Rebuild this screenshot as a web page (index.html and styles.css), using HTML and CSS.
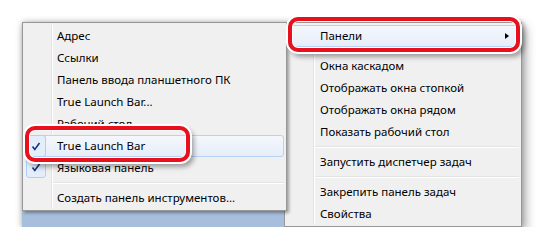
FILE: index.html
```html
<!DOCTYPE html>
<html lang="ru">
<head>
    <meta charset="UTF-8">
    <title>Панели</title>
    <link rel="stylesheet" href="styles.css">
</head>
<body>
<div class="scene">
    <div class="left-col">
        <div class="menu sub-menu">
            <div class="item">Адрес</div>
            <div class="item">Ссылки</div>
            <div class="item">Панель ввода планшетного ПК</div>
            <div class="item">True Launch Bar...</div>
            <div class="item">Рабочий стол</div>
            <div class="item hover checked">
                <span class="check"><svg width="10" height="9" viewBox="0 0 10 9"><path d="M1.5 4.5 L3.8 7.5 L8.5 1" fill="none" stroke="#1b2f86" stroke-width="1.6"/></svg></span>
                True Launch Bar
            </div>
            <div class="item checked">
                <span class="check"><svg width="10" height="9" viewBox="0 0 10 9"><path d="M1.5 4.5 L3.8 7.5 L8.5 1" fill="none" stroke="#1b2f86" stroke-width="1.6"/></svg></span>
                Языковая панель
            </div>
            <div class="sep"></div>
            <div class="item">Создать панель инструментов...</div>
        </div>
        <div class="desk"></div>
    </div>

    <div class="menu main-menu">
        <div class="item hover">Панели<span class="arrow"></span></div>
        <div class="sep"></div>
        <div class="item">Окна каскадом</div>
        <div class="item">Отображать окна стопкой</div>
        <div class="item">Отображать окна рядом</div>
        <div class="item">Показать рабочий стол</div>
        <div class="sep"></div>
        <div class="item">Запустить диспетчер задач</div>
        <div class="sep"></div>
        <div class="item">Закрепить панель задач</div>
        <div class="item">Свойства</div>
    </div>

    <!-- red marks drawn over the screenshot -->
    <div class="mark mark-left"></div>
    <div class="mark mark-right"></div>
</div>
</body>
</html>
```

FILE: styles.css
```css
body {margin: 0; background: #fff; font-family: "Noto Sans", "Open Sans", sans-serif; font-size: 11.5px; color: #000;}

.scene {position: relative; display: flex; margin: 22px 0 0 22px; width: 500px; height: 205px;
    box-shadow: 0 0 6px rgba(0,0,0,0.25), 4px 5px 10px rgba(0,0,0,0.3);}

.left-col {width: 262px; display: flex; flex-direction: column; position: relative; z-index: 1;}
.desk {flex: 1; background: #a7bfdc;}

/* menu styles */
.menu {position: relative; box-sizing: border-box; background: #f0f0f0; border: 1px solid #979797; padding: 2px;}
.menu::before {content: ""; position: absolute; top: 2px; bottom: 2px; left: 28px; width: 1px;
    background: #e2e3e3; border-right: 1px solid #fff;}
.sub-menu {width: 265px; height: 189px; box-shadow: 2px 2px 3px rgba(0,0,0,0.35);}
.main-menu {width: 238px; height: 205px;}

.item {position: relative; height: 22px; line-height: 22px; padding-left: 32px; white-space: nowrap; box-sizing: border-box;}
.main-menu .item {padding-left: 33px;}
.item.hover {border: 1px solid #b8d2f2; border-radius: 3px; line-height: 20px; padding-left: 31px;
    background: linear-gradient(#f4f7fc, #e6eef9);}
.main-menu .item.hover {padding-left: 32px;}

.sep {position: relative; height: 8px;}
.sep::after {content: ""; position: absolute; left: 28px; right: 0; top: 3px; height: 1px;
    background: #e2e3e3; border-bottom: 1px solid #fff;}

.check {position: absolute; left: 1px; top: 0; width: 20px; height: 21px; box-sizing: border-box;
    border: 1px solid #aecff7; border-radius: 3px; background: #e4eefa;
    display: flex; align-items: center; justify-content: center;}
.check svg {display: block;}
.item.hover .check {left: 0; top: -1px; height: 22px;}

.arrow {position: absolute; right: 9px; top: 7px; width: 0; height: 0;
    border-left: 4px solid #000; border-top: 3.5px solid transparent; border-bottom: 3.5px solid transparent;}

/* red annotation frames */
.mark {position: absolute; z-index: 2; box-sizing: border-box; border: 4px solid #e8101c; border-radius: 10px;
    box-shadow: 0 0 0 2px #fff, inset 0 0 0 1px #fff, 3px 4px 5px 1px rgba(0,0,0,0.35);}
.mark-left {left: 3px; top: 104px; width: 165px; height: 36px;}
.mark-right {left: 266px; top: -5px; width: 232px; height: 35px;}
```
